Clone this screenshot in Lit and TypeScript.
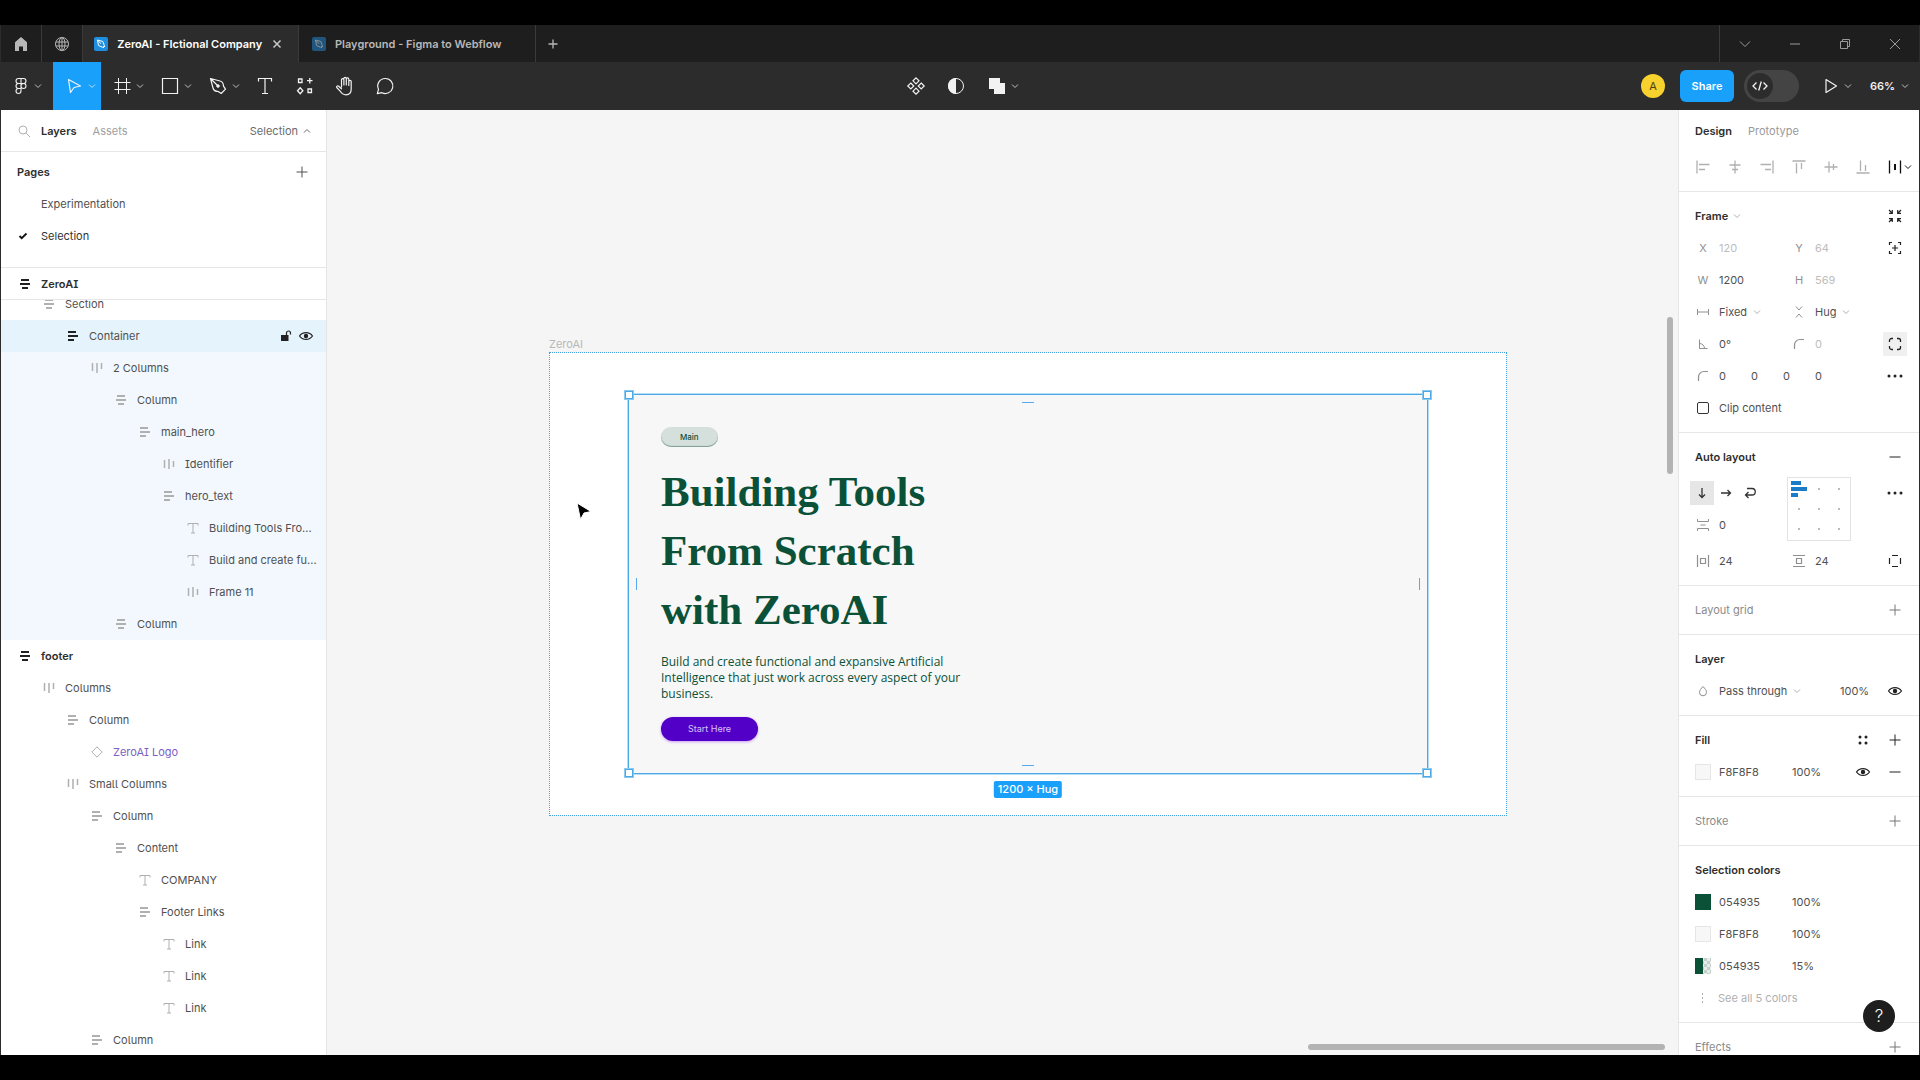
import { LitElement, html, css, svg, nothing } from "lit";
import type { TemplateResult } from "lit";
import { customElement } from "lit/decorators.js";
import { classMap } from "lit/directives/class-map.js";

/* ---------- icons ---------- */

const i24 = (body: TemplateResult) =>
  html`<svg class="i24" width="24" height="24" viewBox="0 0 24 24" fill="none" stroke="currentColor" aria-hidden="true">${body}</svg>`;
const i16 = (body: TemplateResult) =>
  html`<svg class="i16" width="16" height="16" viewBox="0 0 16 16" fill="none" stroke="currentColor" aria-hidden="true">${body}</svg>`;
const chevron = html`<svg class="chev" width="8" height="8" viewBox="0 0 8 8" fill="none" stroke="currentColor" aria-hidden="true"><path d="M1 2.5l3 3 3-3"/></svg>`;
const chevronUp = html`<svg class="chev" width="8" height="8" viewBox="0 0 8 8" fill="none" stroke="currentColor" aria-hidden="true"><path d="M1 5.5l3-3 3 3"/></svg>`;

const icon = {
  home: i16(svg`<path fill="currentColor" stroke="none" d="M8 1l6 5.2V15h-4v-4.500H6V15H2V6.200z"/>`),
  globe: i16(svg`<circle cx="8" cy="8" r="6.500"/><ellipse cx="8" cy="8" rx="3" ry="6.500"/><path d="M8 1.500v13M2 6h12M2 10h12"/>`),
  close: i16(svg`<path stroke-width="1.500" d="M4.500 4.500l7 7m0-7l-7 7"/>`),
  plus: i16(svg`<path d="M8 2.500v11M2.500 8h11"/>`),
  plusSmall: i16(svg`<path stroke-width="1.300" d="M8 3.500v9M3.500 8h9"/>`),
  minus: i16(svg`<path d="M2.500 8h11"/>`),
  winDown: i16(svg`<path d="M3 5.500l5 5 5-5"/>`),
  winMin: i16(svg`<path d="M3 8h10"/>`),
  winRestore: i16(svg`<path d="M3.500 5.500h7v7h-7zM5.500 5.500v-2h7v7h-2"/>`),
  winClose: i16(svg`<path d="M3 3l10 10M13 3L3 13"/>`),
  figma: i24(svg`<path stroke-width="1.100" d="M12 4.500H9.500a2.500 2.500 0 000 5H12zm0 0h2.500a2.500 2.500 0 010 5H12zm0 5H9.500a2.500 2.500 0 000 5H12zm2.500 0a2.500 2.500 0 110 5 2.500 2.500 0 010-5zM12 14.500H9.500A2.500 2.500 0 1012 17z"/>`),
  move: i24(svg`<path stroke-width="1.200" stroke-linejoin="round" d="M6.500 5.500l12 6.500-6.500 1.500-3.500 5z"/>`),
  frame: i24(svg`<path d="M8.500 4v16M16.500 4v16M4.500 8.500h16M4.500 15.500h16"/>`),
  rect: i24(svg`<path stroke-width="1.200" d="M4.500 4.500h15v15h-15z"/>`),
  pen: i24(svg`<path stroke-width="1.200" stroke-linejoin="round" d="M4.500 4.500l2.500 9.500c.5 2 2.500 3.500 5.200 3.500l3 2 4.300-4.300-2-3c0-2.700-1.500-4.700-3.500-5.200z M4.500 4.500l6.500 6.500"/><circle cx="12" cy="12" r="1.300" fill="currentColor"/>`),
  text: i24(svg`<path stroke-width="1.200" d="M5.500 7.500v-3h13v3M12 4.500v15M9 19.500h6"/>`),
  resources: i24(svg`<path stroke-width="1.300" d="M5.500 5h3.500v3.500H5.500zM15 15h3.500v3.500H15zM16.800 4v5.500M14 6.700h5.500M7.200 13.800l2.700 3-2.700 3-2.700-3z"/>`),
  hand: i24(svg`<path stroke-width="1.200" stroke-linecap="round" stroke-linejoin="round" d="M8.500 13V5.800a1.200 1.200 0 012.400 0V11m0-6.500a1.200 1.200 0 012.400 0V11m0-5.800a1.200 1.200 0 012.500 0V11.500m0-4a1.200 1.200 0 012.400 0V15c0 3.500-2 5.800-5.200 5.800-3 0-4.400-1.300-5.600-3.500L3.700 13.500c-.5-1 .7-2.300 2-1.300l2.800 2.600"/>`),
  comment: i24(svg`<path stroke-width="1.200" stroke-linejoin="round" d="M12.500 4.500a7.500 7.500 0 11-3.500 14.200l-4.700.9 1.200-4.300A7.500 7.500 0 0112.500 4.500z"/>`),
  component: i24(svg`<path stroke-width="1.200" d="M12 3.800l3 3-3 3-3-3zM12 14.200l3 3-3 3-3-3zM6.800 9l3 3-3 3-3-3zM17.200 9l3 3-3 3-3-3z"/>`),
  mask: i24(svg`<circle cx="12" cy="12" r="7.500"/><path fill="currentColor" stroke="none" d="M12 4a8 8 0 000 16z"/>`),
  union: i24(svg`<path fill="currentColor" stroke="none" d="M4 4h11v5h5v11H9v-5H4z"/>`),
  play: i24(svg`<path stroke-width="1.200" stroke-linejoin="round" d="M7 5.500l10.500 6.500L7 18.500z"/>`),
  code: i16(svg`<path stroke-width="1.300" d="M4.500 4.500L1 8l3.500 3.500M11.500 4.500L15 8l-3.500 3.500M9.300 3.500l-2.600 9"/>`),
  search: i16(svg`<circle cx="7" cy="7" r="4"/><path d="M10 10l4 4"/>`),
  check: i16(svg`<path stroke-width="1.800" d="M4.500 8l2.200 2.200L11.500 5.500"/>`),
  unlock: i16(svg`<path fill="currentColor" stroke="none" d="M3 7h7.500v6H3z"/><path stroke-width="1.200" d="M8.500 7.500V5a2 2 0 014 0v1.500"/>`),
  eye: i16(svg`<path stroke-width="1.200" d="M1.500 8c3-4.500 10-4.500 13 0-3 4.500-10 4.500-13 0z"/><circle cx="8" cy="8" r="2.200" fill="currentColor" stroke="none"/>`),
  dots4: i16(svg`<path stroke-width="3" stroke-linecap="round" d="M5 5v.01M11 5v.01M5 11v.01M11 11v.01"/>`),
  more: i16(svg`<path stroke-width="3" stroke-linecap="round" d="M2 8v.01M8 8v.01M14 8v.01"/>`),
  fit: i16(svg`<path stroke-width="1.200" d="M2 2l3 3M2 5.300h3.300V2M14 2l-3 3M14 5.300h-3.300V2M2 14l3-3M2 10.700h3.300V14M14 14l-3-3M14 10.700h-3.300V14"/>`),
  target: i16(svg`<path stroke-width="1.200" d="M5 2.500H2.500V5M11 2.500h2.500V5M5 13.500H2.500V11M11 13.500h2.500V11M8 5v6M5 8h6"/>`),
  fixed: i16(svg`<path d="M2.500 5v6M13.500 5v6M2.500 8h11"/>`),
  hug: i16(svg`<path d="M5 2.500L8 6l3-3.500M5 13.500L8 10l3 3.500"/>`),
  angle: i16(svg`<path d="M4.500 3.500v9h8M4.500 7.500a5 5 0 015 5"/>`),
  radius: i16(svg`<path stroke-width="1.200" d="M3.500 13V9a5.500 5.500 0 015.500-5.500h4"/>`),
  corners: i16(svg`<path stroke-width="1.300" d="M2.500 6V4.500a2 2 0 012-2H6M10 2.500h1.500a2 2 0 012 2V6M13.500 10v1.500a2 2 0 01-2 2H10M6 13.500H4.500a2 2 0 01-2-2V10"/>`),
  down: i16(svg`<path stroke-width="1.300" d="M8 3v9.500M5 9.500l3 3 3-3"/>`),
  right: i16(svg`<path stroke-width="1.300" d="M3 8h9.500M9.500 5l3 3-3 3"/>`),
  wrap: i16(svg`<path stroke-width="1.300" d="M5 3.500h5a3 3 0 010 6.500H3.500M6.500 7l-3 3 3 3"/>`),
  gap: i16(svg`<path d="M2.500 2v2.500h11V2M5.500 8h5M2.500 14v-2.500h11V14"/>`),
  padH: i16(svg`<path stroke-width="1.200" d="M2.500 2v12M13.500 2v12M5.500 5.500h5v5h-5z"/>`),
  padV: i16(svg`<path stroke-width="1.200" d="M2 2.500h12M2 13.500h12M5.500 5.500h5v5h-5z"/>`),
  padAll: i16(svg`<path stroke-width="1.200" d="M5 2.500h6M5 13.500h6M2.500 5v6M13.500 5v6"/>`),
  drop: i16(svg`<path d="M8 3.500c2 2.200 3.500 3.800 3.500 5.800a3.500 3.500 0 01-7 0c0-2 1.500-3.600 3.500-5.800z"/>`),
  dashed: i16(svg`<path stroke-dasharray="2 2" d="M7.500 3v10"/>`),
  alignL: i16(svg`<path stroke-width="1.300" d="M2 1.500v13M4 5.500h10.500M4 10.500h6"/>`),
  alignHC: i16(svg`<path stroke-width="1.300" d="M8 1.500v13M2.500 6h11M5 10.500h6"/>`),
  alignR: i16(svg`<path stroke-width="1.300" d="M14 1.500v13M12 5.500H1.500M12 10.500H6"/>`),
  alignT: i16(svg`<path stroke-width="1.300" d="M1.500 2h13M5.500 4v10.500M10.500 4v6"/>`),
  alignVC: i16(svg`<path stroke-width="1.300" d="M1.500 8h13M6 2.500v11M10.500 5v6"/>`),
  alignB: i16(svg`<path stroke-width="1.300" d="M1.500 14h13M5.500 12V1.500M10.500 12V6"/>`),
  distribute: i16(svg`<path stroke-width="1.300" d="M2.500 1.500v13M13.500 1.500v13"/><path stroke-width="2" d="M8 5v6"/>`),
};

const glyph = {
  rowsCenter: i16(svg`<path stroke-width="2" d="M4 4h8M3 8h10M5 12h6"/>`),
  rowsLeft: i16(svg`<path stroke-width="2" d="M3 4h8M3 8h10M3 12h6"/>`),
  colsTop: i16(svg`<path stroke-width="1.500" d="M3.500 3v8M8 3v10M12.500 3v6"/>`),
  colsCenter: i16(svg`<path stroke-width="1.500" d="M3.500 4v8M8 3v10M12.500 5v6"/>`),
  text: i16(svg`<path d="M3 5.500v-2h10v2M8 3.500v9.500M6 13h4"/>`),
  diamond: i16(svg`<path d="M8 2.800L13.200 8 8 13.200 2.800 8z"/>`),
};

const penBadge = html`<svg width="14" height="14" viewBox="0 0 14 14" aria-hidden="true"><rect width="14" height="14" rx="2" fill="#1e8fe0"/><path d="M3.500 3l1 5.500 4 1.800 1.800-1.800-1.500-4zM3.500 3l3.500 3.800" fill="none" stroke="#fff"/><path d="M9 11l2-2" stroke="#fff"/></svg>`;

/* ---------- data ---------- */

type Kind = keyof typeof glyph;
interface Layer { name: string; kind: Kind; depth: number; state?: "selected" | "inside" | "top" | "instance" }

const layers: Layer[] = [
  { name: "Section", kind: "rowsCenter", depth: 1 },
  { name: "Container", kind: "rowsLeft", depth: 2, state: "selected" },
  { name: "2 Columns", kind: "colsTop", depth: 3, state: "inside" },
  { name: "Column", kind: "rowsCenter", depth: 4, state: "inside" },
  { name: "main_hero", kind: "rowsLeft", depth: 5, state: "inside" },
  { name: "Identifier", kind: "colsCenter", depth: 6, state: "inside" },
  { name: "hero_text", kind: "rowsLeft", depth: 6, state: "inside" },
  { name: "Building Tools Fro...", kind: "text", depth: 7, state: "inside" },
  { name: "Build and create fu...", kind: "text", depth: 7, state: "inside" },
  { name: "Frame 11", kind: "colsCenter", depth: 7, state: "inside" },
  { name: "Column", kind: "rowsCenter", depth: 4, state: "inside" },
  { name: "footer", kind: "rowsCenter", depth: 0, state: "top" },
  { name: "Columns", kind: "colsTop", depth: 1 },
  { name: "Column", kind: "rowsLeft", depth: 2 },
  { name: "ZeroAI Logo", kind: "diamond", depth: 3, state: "instance" },
  { name: "Small Columns", kind: "colsTop", depth: 2 },
  { name: "Column", kind: "rowsLeft", depth: 3 },
  { name: "Content", kind: "rowsLeft", depth: 4 },
  { name: "COMPANY", kind: "text", depth: 5 },
  { name: "Footer Links", kind: "rowsLeft", depth: 5 },
  { name: "Link", kind: "text", depth: 6 },
  { name: "Link", kind: "text", depth: 6 },
  { name: "Link", kind: "text", depth: 6 },
  { name: "Column", kind: "rowsLeft", depth: 3 },
];

/* ---------- shared styles ---------- */

const base = css`
  * { box-sizing: border-box; }
  svg { display: block; flex: none; }
  button, input, select {
    margin: 0; padding: 0; border: 0; border-radius: 0; background: none;
    font: inherit; color: inherit; min-width: 0;
  }
  button { display: flex; align-items: center; justify-content: center; }
  select { appearance: none; }
  ul { list-style: none; margin: 0; padding: 0; }
  h2, h3, p { margin: 0; font: inherit; }
  .bold { font-weight: 600; color: #2e2e2e; }
`;

/* ---------- title tabs ---------- */

@customElement("title-tabs")
export class TitleTabs extends LitElement {
  static styles = [base, css`
    :host { display: flex; height: 37px; background: #1e1e1e; color: #b8b8b8; font-weight: 600; }
    .square { width: 41px; border-right: 1px solid #3a3a3a; }
    .tab { display: flex; align-items: center; gap: 9px; padding: 0 13px; border-right: 1px solid #3a3a3a; white-space: nowrap; }
    .tab .open { gap: 9px; }
    .active { width: 216px; background: #2c2c2c; color: #fff; }
    .other { width: 237px; }
    .other svg { opacity: 0.5; }
    .close { color: #c8c8c8; }
    .add { width: 34px; }
    .window { display: flex; margin-left: auto; border-left: 1px solid #3a3a3a; color: #9a9a9a; }
    .window button { width: 50px; }
    .window button:last-child { width: 49px; }
  `];
  render() {
    return html`
      <button class="square" aria-label="Home">${icon.home}</button>
      <button class="square" aria-label="Community">${icon.globe}</button>
      <div class="tab active"><button class="open">${penBadge}ZeroAI - FIctional Company</button><button class="close" aria-label="Close tab">${icon.close}</button></div>
      <div class="tab other"><button class="open">${penBadge}Playground - Figma to Webflow</button></div>
      <button class="add" aria-label="New tab">${icon.plusSmall}</button>
      <div class="window">
        <button aria-label="Tab list">${icon.winDown}</button>
        <button aria-label="Minimize">${icon.winMin}</button>
        <button aria-label="Restore">${icon.winRestore}</button>
        <button aria-label="Close window">${icon.winClose}</button>
      </div>`;
  }
}

/* ---------- toolbar ---------- */

@customElement("tool-bar")
export class ToolBar extends LitElement {
  static styles = [base, css`
    :host { display: grid; grid-template-columns: 1fr auto 1fr; height: 48px; background: #2c2c2c; color: #f2f2f2; }
    .group { display: flex; }
    .tool { width: 40px; }
    .menu { width: 48px; gap: 2px; padding-left: 4px; }
    .main { width: 52px; padding: 0 3px 0 0; gap: 1px; }
    .active { background: #18a0fb; }
    .chev { opacity: 0.75; }
    .end { justify-content: flex-end; align-items: center; padding-right: 2px; }
    .avatar { width: 24px; height: 24px; margin-right: 15px; border-radius: 12px; background: #f7d12e; color: #4d4010; }
    .share { width: 54px; height: 32px; margin-right: 10px; border-radius: 6px; background: #18a0fb; color: #fff; font-weight: 600; }
    .dev { justify-content: flex-start; width: 55px; height: 32px; padding-left: 3px; border-radius: 16px; background: #444; }
    .knob { display: grid; place-items: center; width: 26px; height: 26px; border-radius: 13px; background: #2c2c2c; }
    .play { width: 54px; margin-left: 9px; gap: 1px; }
    .zoom { width: 55px; gap: 6px; font-weight: 600; }
  `];
  render() {
    return html`
      <div class="group">
        <button class="menu main" aria-label="Main menu">${icon.figma}${chevron}</button>
        <button class="menu active" aria-label="Move">${icon.move}${chevron}</button>
        <button class="menu" aria-label="Frame">${icon.frame}${chevron}</button>
        <button class="menu" aria-label="Rectangle">${icon.rect}${chevron}</button>
        <button class="menu" aria-label="Pen">${icon.pen}${chevron}</button>
        <button class="tool" aria-label="Text">${icon.text}</button>
        <button class="tool" aria-label="Resources">${icon.resources}</button>
        <button class="tool" aria-label="Hand">${icon.hand}</button>
        <button class="tool" aria-label="Comment">${icon.comment}</button>
      </div>
      <div class="group">
        <button class="tool" aria-label="Create component">${icon.component}</button>
        <button class="tool" aria-label="Use as mask">${icon.mask}</button>
        <button class="menu" aria-label="Union selection">${icon.union}${chevron}</button>
      </div>
      <div class="group end">
        <button class="avatar" aria-label="Account A">A</button>
        <button class="share">Share</button>
        <button class="dev" role="switch" aria-checked="false" aria-label="Dev mode"><span class="knob">${icon.code}</span></button>
        <button class="play" aria-label="Present">${icon.play}${chevron}</button>
        <button class="zoom" aria-label="Zoom 66%">66%${chevron}</button>
      </div>`;
  }
}

/* ---------- layers panel ---------- */

@customElement("layers-panel")
export class LayersPanel extends LitElement {
  static styles = [base, css`
    :host { display: flex; flex-direction: column; width: 326px; min-height: 0; flex: none; background: #fff; border-right: 1px solid #e5e5e5; }
    .head { display: flex; align-items: center; height: 42px; padding: 0 15px; border-bottom: 1px solid #e6e6e6; }
    .head .search { color: #b0b0b0; margin-right: 9px; }
    .head .assets { margin-left: 16px; color: #a0a0a0; }
    .head .page { margin-left: auto; gap: 5px; color: #6b6b6b; }
    .pages { padding: 4px 0 15px; border-bottom: 1px solid #e6e6e6; }
    .row { display: flex; align-items: center; width: 100%; height: 32px; padding: 0 12px 0 16px; gap: 8px; color: #505050; white-space: nowrap; }
    .row.bold { color: #2e2e2e; }
    .pages button.row { justify-content: flex-start; padding-left: 40px; }
    .pages .title { justify-content: space-between; padding: 0 16px; }
    .pages button.current { padding-left: 14px; gap: 10px; color: #333; }
    .pages .current svg { color: #111; }
    .pinned { border-bottom: 1px solid #e6e6e6; }
    .pinned, .tree { font-feature-settings: "cv05", "cv08"; }
    .tree { flex: 1; min-height: 0; overflow-y: auto; scrollbar-width: none; }
    .glyph { color: #b0b0b0; }
    .strong .glyph { color: #222; }
    .selected { background: #e5f3fd; }
    .inside { background: #f2f8fe; }
    .row.instance { color: #7b61c4; }
    .actions { display: flex; gap: 4px; margin-left: auto; color: #222; }
  `];
  firstUpdated() {
    this.renderRoot.querySelector(".tree")!.scrollTop = 12;
  }
  private row(l: Layer) {
    const strong = l.state === "top" || l.state === "selected";
    return html`<li class=${classMap({ row: true, strong, bold: l.state === "top", [l.state ?? "plain"]: true })}
      style="padding-left:${16 + l.depth * 24}px">
      <span class="glyph">${glyph[l.kind]}</span><span>${l.name}</span>
      ${l.state === "selected"
        ? html`<span class="actions"><button aria-label="Lock">${icon.unlock}</button><button aria-label="Hide">${icon.eye}</button></span>`
        : nothing}
    </li>`;
  }
  render() {
    return html`
      <div class="head">
        <button class="search" aria-label="Search">${icon.search}</button>
        <button class="bold">Layers</button>
        <button class="assets">Assets</button>
        <button class="page">Selection ${chevronUp}</button>
      </div>
      <div class="pages">
        <div class="row title"><h2 class="bold">Pages</h2><button aria-label="Add page">${icon.plus}</button></div>
        <button class="row">Experimentation</button>
        <button class="row current">${icon.check}Selection</button>
      </div>
      <div class="row pinned strong bold"><span class="glyph">${glyph.rowsCenter}</span>ZeroAI</div>
      <ul class="tree">${layers.map((l) => this.row(l))}</ul>`;
  }
}

/* ---------- canvas ---------- */

@customElement("design-canvas")
export class DesignCanvas extends LitElement {
  static styles = [base, css`
    :host { display: block; position: relative; flex: 1; min-width: 0; overflow: hidden; background: #f5f5f5; }
    .artboard { position: absolute; left: 222px; top: 226px; }
    .label { color: #b8b8b8; height: 16px; line-height: 16px; }
    .page { width: 958px; padding: 41px 78px; background: #fff; border: 1px dotted #3f9fda; }
    .container { position: relative; display: flex; flex-direction: column; align-items: flex-start; gap: 15px; height: 380px; padding: 32px; background: #f7f7f7; border: 1px solid #4aa8e4; box-shadow: 0 0 0 1px #b5def6; color: #0b5137; }
    .pill { height: 21px; padding: 0 19px; border-radius: 11px; background: #d5e0dc; box-shadow: inset 0 -1px 1px #7f9c90; font: 500 8px/20px Inter, sans-serif; }
    h1 { margin: 0; width: 300px; font: 700 43px/59px "Liberation Serif", serif; }
    p { width: 310px; font: 400 12px/16px "Open Sans", sans-serif; }
    .cta { width: 97px; height: 26px; border-radius: 13px; background: #5200c8; box-shadow: 0 1px 3px #c99cf5; color: #d6c4f4; font: 400 9px/16px Inter, sans-serif; }
    .handle { position: absolute; width: 8px; height: 8px; background: #fff; border: 1px solid #4aa8e4; box-shadow: 0 0 0 1px #8ccbf0; }
    .n { top: -4px; } .s { bottom: -4px; } .w { left: -4px; } .e { right: -4px; }
    .grip { position: absolute; background: #58a9ee; }
    .gh { width: 12px; height: 1px; left: calc(50% - 6px); }
    .gv { width: 1px; height: 12px; top: calc(50% - 6px); }
    .gt { top: 7px; } .gb { bottom: 7px; } .gl { left: 7px; } .gr { right: 7px; }
    .size { position: absolute; top: calc(100% + 8px); left: 50%; transform: translateX(-50%); padding: 0 4px; border-radius: 2px; background: #18a0fb; color: #fff; font-weight: 500; line-height: 17px; white-space: nowrap; }
    .cursor { position: absolute; left: 249px; top: 392px; }
    .bar { position: absolute; border-radius: 3px; background: #b3b3b3; }
    .vertical { right: 5px; top: 207px; width: 6px; height: 157px; }
    .horizontal { right: 13px; bottom: 5px; width: 357px; height: 6px; }
  `];
  render() {
    return html`
      <div class="artboard">
        <div class="label">ZeroAI</div>
        <div class="page">
          <div class="container">
            <span class="pill">Main</span>
            <h1>Building Tools From Scratch with ZeroAI</h1>
            <p>Build and create functional and expansive Artificial Intelligence that just work across every aspect of your business.</p>
            <button class="cta">Start Here</button>
            <span class="handle n w"></span><span class="handle n e"></span>
            <span class="handle s w"></span><span class="handle s e"></span>
            <span class="grip gh gt"></span><span class="grip gh gb"></span>
            <span class="grip gv gl"></span><span class="grip gv gr"></span>
            <span class="size">1200 × Hug</span>
          </div>
        </div>
      </div>
      <svg class="cursor" width="18" height="20" viewBox="0 0 18 20" aria-hidden="true"><path d="M1 1l14 8.500-7 1.500-3.500 6.500z" fill="#000" stroke="#fff"/></svg>
      <div class="bar vertical"></div>
      <div class="bar horizontal"></div>`;
  }
}

/* ---------- inspector ---------- */

@customElement("inspector-panel")
export class InspectorPanel extends LitElement {
  static styles = [base, css`
    :host { display: block; width: 241px; flex: none; min-height: 0; overflow: hidden; background: #fff; border-left: 1px solid #e5e5e5; color: #505050; }
    section { padding: 8px 0; border-bottom: 1px solid #e6e6e6; }
    section:last-child { border-bottom: 0; }
    .first { padding-top: 0; }
    .tabs { display: flex; align-items: center; gap: 16px; height: 41px; padding: 0 16px; }
    .muted { color: #9a9a9a; }
    .off, .off input { color: #bdbdbd; }
    .row { display: flex; align-items: center; height: 32px; padding: 0 12px 0 16px; }
    .align { gap: 16px; padding-right: 0; color: #b0b0b0; }
    .align button { flex: none; }
    .align .last { color: #111; gap: 1px; }
    .title { color: #2e2e2e; font-weight: 600; }
    .title select { width: 38px; }
    .empty { color: #8a8a8a; }
    .cell { display: flex; align-items: center; gap: 8px; width: 96px; }
    .cell:first-child { flex: none; }
    .cell > svg, .cell .axis { color: #8f8f8f; }
    .axis { flex: none; width: 16px; text-align: center; }
    .cell input { width: 60px; }
    .cell select { width: 30px; }
    .cell .chev, .title .chev { color: #b0b0b0; }
    .cell .chev { margin-left: -4px; }
    .hug select { width: 23px; }
    .mode { width: 130px; }
    .mode select { width: 70px; }
    .corners { display: flex; gap: 8px; }
    .corners .cell { width: 48px; }
    .corners input { width: 24px; }
    .end { display: flex; gap: 8px; margin-left: auto; color: #222; }
    .end button { flex: none; width: 24px; height: 24px; }
    .end .on { background: #f0f0f0; }
    .empty .end { color: #777; }
    .end input { width: 35px; color: #505050; }
    .check { gap: 8px; }
    .check input { appearance: none; width: 12px; height: 12px; margin: 0 2px; border: 1px solid #333; border-radius: 2px; }
    .layout { display: flex; align-items: flex-start; height: 72px; padding: 4px 12px 4px 16px; }
    .flow { width: 92px; }
    .dirs { display: flex; height: 32px; align-items: center; }
    .dirs button { flex: none; width: 24px; height: 24px; color: #333; }
    .dirs button:first-child { margin-left: -5px; background: #e6e6e6; }
    .anchor { display: grid; grid-template-columns: repeat(3, 20px); grid-auto-rows: 20px; width: 64px; height: 64px; padding: 1px; border: 1px solid #e3e3e3; }
    .anchor button::before { content: ""; width: 2px; height: 2px; background: #bbb; }
    .anchor .set::before { display: none; }
    .anchor .set { color: #1a7bc9; }
    .layout .end { padding-top: 4px; }
    .swatch { flex: none; width: 16px; height: 16px; margin-right: 8px; border: 1px solid #e6e6e6; }
    .green { background: #0b5137; border-color: #0b5137; }
    .pale { background: #f7f7f7; }
    .split { border: 0; background: linear-gradient(90deg, #0b5137 50%, transparent 50%), repeating-conic-gradient(#c4d0cb 0 25%, #e8ecea 0 50%) 0 0 / 6px 6px; }
    .hex { width: 65px; margin-right: 8px; }
    .pct { width: 35px; }
    .more { color: #b0b0b0; gap: 7px; }
  `];
  private num(ic: TemplateResult | string, label: string, value: string, off = false) {
    return html`<label class="cell ${off ? "off" : ""}">${typeof ic === "string" ? html`<span class="axis">${ic}</span>` : ic}<input aria-label=${label} .value=${value}></label>`;
  }
  private color(cls: string, hex: string, pct: string, end: TemplateResult | typeof nothing = nothing) {
    return html`<div class="row"><button class="swatch ${cls}" aria-label="Colour ${hex}"></button>
      <input class="hex" aria-label="Hex" .value=${hex}><input class="pct" aria-label="Opacity" .value=${pct}>${end}</div>`;
  }
  private add(title: string) {
    return html`<section><div class="row empty"><h3>${title}</h3><span class="end"><button aria-label="Add ${title}">${icon.plus}</button></span></div></section>`;
  }
  render() {
    return html`
      <section class="first">
        <div class="tabs"><button class="bold">Design</button><button class="muted">Prototype</button></div>
        <div class="row align">
          <button aria-label="Align left">${icon.alignL}</button>
          <button aria-label="Align horizontal centers">${icon.alignHC}</button>
          <button aria-label="Align right">${icon.alignR}</button>
          <button aria-label="Align top">${icon.alignT}</button>
          <button aria-label="Align vertical centers">${icon.alignVC}</button>
          <button aria-label="Align bottom">${icon.alignB}</button>
          <button class="last" aria-label="Distribute">${icon.distribute}${chevron}</button>
        </div>
      </section>
      <section>
        <div class="row title"><select aria-label="Type"><option>Frame</option></select>${chevron}
          <span class="end"><button aria-label="Resize to fit">${icon.fit}</button></span></div>
        <div class="row">${this.num("X", "X", "120", true)}${this.num("Y", "Y", "64", true)}
          <span class="end"><button aria-label="Absolute position">${icon.target}</button></span></div>
        <div class="row">${this.num("W", "Width", "1200")}${this.num("H", "Height", "569", true)}</div>
        <div class="row">
          <label class="cell">${icon.fixed}<select aria-label="Horizontal resizing"><option>Fixed</option></select>${chevron}</label>
          <label class="cell hug">${icon.hug}<select aria-label="Vertical resizing"><option>Hug</option></select>${chevron}</label>
        </div>
        <div class="row">${this.num(icon.angle, "Rotation", "0°")}${this.num(icon.radius, "Corner radius", "0", true)}
          <span class="end"><button class="on" aria-label="Independent corners">${icon.corners}</button></span></div>
        <div class="row">
          <div class="corners">
            ${this.num(icon.radius, "Top left radius", "0")}
            ${["Top right", "Bottom right", "Bottom left"].map((c) => html`<input aria-label="${c} radius" .value=${"0"}>`)}
          </div>
          <span class="end"><button aria-label="More">${icon.more}</button></span></div>
        <label class="row check"><input type="checkbox">Clip content</label>
      </section>
      <section>
        <div class="row title"><h3>Auto layout</h3><span class="end"><button aria-label="Remove auto layout">${icon.minus}</button></span></div>
        <div class="layout">
          <div class="flow">
            <div class="dirs"><button aria-label="Vertical">${icon.down}</button><button aria-label="Horizontal">${icon.right}</button><button aria-label="Wrap">${icon.wrap}</button></div>
            <div class="dirs">${this.num(icon.gap, "Gap", "0")}</div>
          </div>
          <div class="anchor">
            <button class="set" aria-label="Top left"><svg width="18" height="18" viewBox="0 0 18 18" aria-hidden="true"><path fill="currentColor" d="M1 1h10v4H1zM1 7h16v4H1zM1 13h7v4H1z"/></svg></button>
            ${["Top", "Top right", "Left", "Center", "Right", "Bottom left", "Bottom", "Bottom right"].map((a) => html`<button aria-label=${a}></button>`)}
          </div>
          <span class="end"><button aria-label="Advanced layout">${icon.more}</button></span>
        </div>
        <div class="row">${this.num(icon.padH, "Horizontal padding", "24")}${this.num(icon.padV, "Vertical padding", "24")}
          <span class="end"><button aria-label="Individual padding">${icon.padAll}</button></span></div>
      </section>
      ${this.add("Layout grid")}
      <section>
        <div class="row title"><h3>Layer</h3></div>
        <div class="row"><label class="cell mode">${icon.drop}<select aria-label="Blend mode"><option>Pass through</option></select>${chevron}</label>
          <span class="end"><input aria-label="Layer opacity" .value=${"100%"}><button aria-label="Toggle visibility">${icon.eye}</button></span></div>
      </section>
      <section>
        <div class="row title"><h3>Fill</h3><span class="end"><button aria-label="Styles">${icon.dots4}</button><button aria-label="Add fill">${icon.plus}</button></span></div>
        ${this.color("pale", "F8F8F8", "100%", html`<span class="end"><button aria-label="Toggle fill">${icon.eye}</button><button aria-label="Remove fill">${icon.minus}</button></span>`)}
      </section>
      ${this.add("Stroke")}
      <section>
        <div class="row title"><h3>Selection colors</h3></div>
        ${this.color("green", "054935", "100%")}
        ${this.color("pale", "F8F8F8", "100%")}
        ${this.color("split", "054935", "15%")}
        <button class="row more">${icon.dashed}See all 5 colors</button>
      </section>
      ${this.add("Effects")}`;
  }
}

/* ---------- shell ---------- */

@customElement("app-root")
export class AppRoot extends LitElement {
  static styles = [base, css`
    :host { display: flex; box-sizing: border-box; height: 100vh; padding: 25px 0; background: #000; font: 400 11px/16px Inter, sans-serif; }
    .app { flex: 1; min-width: 0; display: flex; flex-direction: column; border: solid #2c2c2c; border-width: 0 1px; }
    .body { position: relative; flex: 1; min-height: 0; display: flex; }
    .help { position: absolute; right: 24px; bottom: 23px; width: 32px; height: 32px; border-radius: 16px; background: #1e1e1e; color: #fff; font-size: 17px; font-weight: 300; }
  `];
  render() {
    return html`<div class="app">
      <title-tabs></title-tabs>
      <tool-bar></tool-bar>
      <div class="body">
        <layers-panel></layers-panel>
        <design-canvas></design-canvas>
        <inspector-panel></inspector-panel>
        <button class="help" aria-label="Help">?</button>
      </div>
    </div>`;
  }
}
